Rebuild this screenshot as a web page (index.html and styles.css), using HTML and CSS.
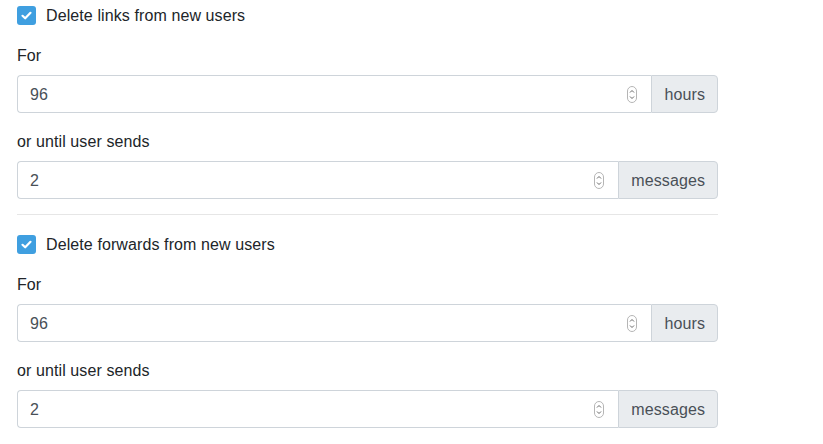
FILE: index.html
```html
<!DOCTYPE html>
<html>
<head>
<meta charset="utf-8">
<link rel="stylesheet" href="styles.css">
</head>
<body>
<div class="panel">
  <section class="section">
    <label class="check-row">
      <span class="checkbox"><svg viewBox="0 0 19 19" width="19" height="19"><path d="M5.5 9.8 L8.2 12.3 L13.5 6.8" fill="none" stroke="#fff" stroke-width="2.2" stroke-linecap="round" stroke-linejoin="round"/></svg></span>
      <span class="check-text">Delete links from new users</span>
    </label>
    <div class="form-group">
      <div class="label">For</div>
      <div class="input-group">
        <div class="input"><span class="value">96</span><span class="spinner"><svg viewBox="0 0 10 17" width="10" height="17"><rect x="0.5" y="0.5" width="9" height="16" rx="4.5" fill="#fff" stroke="#b5b5b5"/><path d="M3 6.5 L5 4.5 L7 6.5" fill="none" stroke="#666" stroke-width="1"/><path d="M3 10.5 L5 12.5 L7 10.5" fill="none" stroke="#666" stroke-width="1"/></svg></span></div>
        <div class="addon">hours</div>
      </div>
    </div>
    <div class="form-group">
      <div class="label">or until user sends</div>
      <div class="input-group">
        <div class="input"><span class="value">2</span><span class="spinner"><svg viewBox="0 0 10 17" width="10" height="17"><rect x="0.5" y="0.5" width="9" height="16" rx="4.5" fill="#fff" stroke="#b5b5b5"/><path d="M3 6.5 L5 4.5 L7 6.5" fill="none" stroke="#666" stroke-width="1"/><path d="M3 10.5 L5 12.5 L7 10.5" fill="none" stroke="#666" stroke-width="1"/></svg></span></div>
        <div class="addon">messages</div>
      </div>
    </div>
  </section>
  <hr class="divider">
  <section class="section">
    <label class="check-row">
      <span class="checkbox"><svg viewBox="0 0 19 19" width="19" height="19"><path d="M5.5 9.8 L8.2 12.3 L13.5 6.8" fill="none" stroke="#fff" stroke-width="2.2" stroke-linecap="round" stroke-linejoin="round"/></svg></span>
      <span class="check-text">Delete forwards from new users</span>
    </label>
    <div class="form-group">
      <div class="label">For</div>
      <div class="input-group">
        <div class="input"><span class="value">96</span><span class="spinner"><svg viewBox="0 0 10 17" width="10" height="17"><rect x="0.5" y="0.5" width="9" height="16" rx="4.5" fill="#fff" stroke="#b5b5b5"/><path d="M3 6.5 L5 4.5 L7 6.5" fill="none" stroke="#666" stroke-width="1"/><path d="M3 10.5 L5 12.5 L7 10.5" fill="none" stroke="#666" stroke-width="1"/></svg></span></div>
        <div class="addon">hours</div>
      </div>
    </div>
    <div class="form-group">
      <div class="label">or until user sends</div>
      <div class="input-group">
        <div class="input"><span class="value">2</span><span class="spinner"><svg viewBox="0 0 10 17" width="10" height="17"><rect x="0.5" y="0.5" width="9" height="16" rx="4.5" fill="#fff" stroke="#b5b5b5"/><path d="M3 6.5 L5 4.5 L7 6.5" fill="none" stroke="#666" stroke-width="1"/><path d="M3 10.5 L5 12.5 L7 10.5" fill="none" stroke="#666" stroke-width="1"/></svg></span></div>
        <div class="addon">messages</div>
      </div>
    </div>
  </section>
</div>
</body>
</html>
```
FILE: styles.css
```css
html, body {
  margin: 0;
  padding: 0;
  background: #fff;
}
body {
  font-family: "Liberation Sans", Arial, sans-serif;
  font-size: 16px;
  line-height: 24px;
  letter-spacing: 0.1px;
  color: #212529;
}
.panel {
  width: 701px;
  padding: 3px 0 0 17px;
}
.section {
  display: flex;
  flex-direction: column;
  gap: 16px;
}
.check-row {
  display: flex;
  align-items: center;
  gap: 10px;
  height: 24px;
}
.checkbox {
  width: 19px;
  height: 19px;
  border-radius: 3px;
  background: #3f9fe0;
  display: flex;
}
.check-text {
  color: #212529;
  padding-top: 1px;
}
.label {
  padding-top: 1px;
  margin-bottom: -1px;
}
.form-group {
  display: flex;
  flex-direction: column;
  gap: 8px;
}
.input-group {
  display: flex;
  height: 38px;
}
.input {
  flex: 1;
  display: flex;
  align-items: center;
  justify-content: space-between;
  border: 1px solid #ced4da;
  border-right: none;
  border-radius: 4px 0 0 4px;
  padding: 1px 14px 0 12px;
  color: #495057;
}
.spinner {
  display: flex;
  width: 10px;
  height: 17px;
}
.addon {
  display: flex;
  align-items: center;
  padding: 1px 12px 0;
  background: #e9ecef;
  border: 1px solid #ced4da;
  border-radius: 0 4px 4px 0;
  color: #495057;
}
.divider {
  border: 0;
  border-top: 1px solid #e6e6e6;
  margin: 15px 0 17px;
}
```
